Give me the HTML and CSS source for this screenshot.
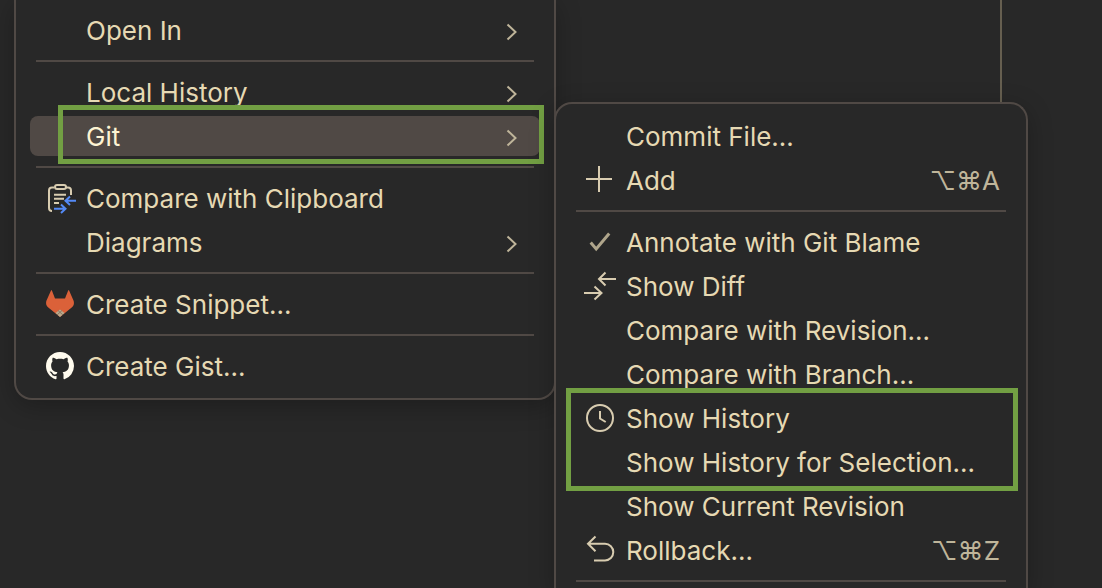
FILE: index.html
```html
<!DOCTYPE html>
<html lang="en">
<head>
    <meta charset="UTF-8">
    <meta name="viewport" content="width=device-width, initial-scale=1.0">
    <title>Git context menu</title>
    <link rel="stylesheet" href="styles.css">
</head>
<body>
<svg class="symbols" aria-hidden="true">
    <symbol id="chevron" viewBox="0 0 32 32">
        <path d="M11.5 10.5l8 7.5-8 7.5"/>
    </symbol>
</svg>

<main class="screen">
    <ul class="menu context-menu">
        <li class="row">
            <button type="button" class="item"><span class="icon"></span><span class="label">Open In</span><svg class="icon arrow"><use href="#chevron"/></svg></button>
        </li>
        <li class="separator"></li>
        <li class="row">
            <button type="button" class="item"><span class="icon"></span><span class="label">Local History</span><svg class="icon arrow"><use href="#chevron"/></svg></button>
        </li>
        <li class="row">
            <button type="button" class="item selected"><span class="icon"></span><span class="label">Git</span><svg class="icon arrow"><use href="#chevron"/></svg></button>
            <span class="marker marker-git"></span>
        </li>
        <li class="separator"></li>
        <li class="row">
            <button type="button" class="item">
                <svg class="icon" viewBox="0 0 32 32">
                    <path d="M10 5.5H8a3 3 0 0 0-3 3V26a3 3 0 0 0 3 3M22 5.5h2a3 3 0 0 1 3 3V13"/>
                    <rect x="11" y="3" width="11" height="4" rx="2"/>
                    <path d="M10 12.7h12M10 16.8h10M10 21h5"/>
                    <path class="blue" d="M32 18.7H22M26 14.5l-4.5 4.2 4.5 4.2M10 26.7h10M17 22.5l4.5 4.2-4.5 4.2"/>
                </svg>
                <span class="label">Compare with Clipboard</span>
            </button>
        </li>
        <li class="row">
            <button type="button" class="item"><span class="icon"></span><span class="label">Diagrams</span><svg class="icon arrow"><use href="#chevron"/></svg></button>
        </li>
        <li class="separator"></li>
        <li class="row">
            <button type="button" class="item">
                <svg class="icon solid" viewBox="0 0 32 32">
                    <path class="fox" d="M7 2.5q.4-1 .9 0L11 10.5h10l3.200-8q.5-1 .9 0L29.700 13q1 4-2 6.500L16 29 4.300 19.500q-3-2.500-2-6.500z"/>
                    <path class="chin" d="M16 21.500l4.500 3.500L16 29l-4.500-4z"/>
                    <path class="chin-lines" d="M14 22.500l5 4.500M18 22.500L13 27"/>
                </svg>
                <span class="label">Create Snippet...</span>
            </button>
        </li>
        <li class="separator"></li>
        <li class="row">
            <button type="button" class="item">
                <svg class="icon solid" viewBox="0 0 32 32">
                    <path class="cat" transform="translate(2 2) scale(1.75)" d="M8 0C3.58 0 0 3.58 0 8c0 3.54 2.29 6.530 5.470 7.590.4.07.55-.17.55-.38 0-.19-.01-.82-.01-1.490-2.010.37-2.530-.49-2.690-.94-.09-.23-.48-.94-.82-1.130-.28-.15-.68-.52-.01-.53.63-.01 1.080.58 1.230.82.72 1.210 1.870.87 2.330.66.07-.52.28-.87.51-1.070-1.780-.2-3.640-.89-3.640-3.950 0-.87.31-1.590.82-2.150-.08-.2-.36-1.020.08-2.120 0 0 .67-.21 2.200.82.64-.18 1.320-.27 2-.27s1.360.09 2 .27c1.530-1.040 2.200-.82 2.200-.82.44 1.100.16 1.920.08 2.120.51.56.82 1.270.82 2.150 0 3.070-1.870 3.750-3.650 3.950.29.25.54.73.54 1.480 0 1.070-.01 1.930-.01 2.200 0 .21.15.46.55.38A8.010 8.010 0 0 0 16 8c0-4.420-3.580-8-8-8z"/>
                </svg>
                <span class="label">Create Gist...</span>
            </button>
        </li>
    </ul>

    <div class="side">
        <div class="guide"></div>
        <ul class="menu submenu">
            <li class="row">
                <button type="button" class="item"><span class="icon"></span><span class="label">Commit File...</span></button>
            </li>
            <li class="row">
                <button type="button" class="item">
                    <svg class="icon" viewBox="0 0 32 32"><path d="M15 2v26M2 15h26"/></svg>
                    <span class="label">Add</span>
                    <kbd class="shortcut">⌥⌘A</kbd>
                </button>
            </li>
            <li class="separator"></li>
            <li class="row">
                <button type="button" class="item">
                    <svg class="icon" viewBox="0 0 32 32"><path class="check" d="M6.700 16.500l5.500 6.500L25.200 7.500"/></svg>
                    <span class="label">Annotate with Git Blame</span>
                </button>
            </li>
            <li class="row">
                <button type="button" class="item">
                    <svg class="icon" viewBox="0 0 32 32"><path d="M32 9H15M21.500 2.500L15 9l6.500 6.500M0 23h17.500M10.500 16.500L17.500 23l-7 6.500"/></svg>
                    <span class="label">Show Diff</span>
                </button>
            </li>
            <li class="row">
                <button type="button" class="item"><span class="icon"></span><span class="label">Compare with Revision...</span></button>
            </li>
            <li class="row">
                <button type="button" class="item"><span class="icon"></span><span class="label">Compare with Branch...</span></button>
            </li>
            <li class="row">
                <button type="button" class="item">
                    <svg class="icon" viewBox="0 0 32 32"><circle cx="16" cy="16" r="13"/><path d="M16 9v7.500l5.700 3.500"/></svg>
                    <span class="label">Show History</span>
                </button>
                <span class="marker marker-history"></span>
            </li>
            <li class="row">
                <button type="button" class="item"><span class="icon"></span><span class="label">Show History for Selection...</span></button>
            </li>
            <li class="row">
                <button type="button" class="item"><span class="icon"></span><span class="label">Show Current Revision</span></button>
            </li>
            <li class="row">
                <button type="button" class="item">
                    <svg class="icon" viewBox="0 0 32 32"><path d="M11.500 2.500L4 9.800l7.500 7.500M4 9.800h17a8.300 8.300 0 0 1 0 16.600H10"/></svg>
                    <span class="label">Rollback...</span>
                    <kbd class="shortcut">⌥⌘Z</kbd>
                </button>
            </li>
            <li class="separator"></li>
        </ul>
    </div>
</main>
</body>
</html>
```
FILE: styles.css
```css
body {
    margin: 0;
    background-color: #282828;
    color: #e6d9b3;
    font-family: Inter, "Liberation Sans", sans-serif;
    font-size: 26px;
    overflow: hidden;
}

.symbols {
    display: none;
}

.screen {
    display: grid;
    grid-template-columns: 542fr 472fr 74fr;
    align-items: start;
    height: 100vh;
    padding-left: 14px;
}

.menu {
    margin: 0;
    padding: 9px 0;
    list-style: none;
    background-color: #282828;
    border: 2px solid #504945;
    border-radius: 18px;
    box-shadow: 0 6px 24px rgba(0, 0, 0, 0.25);
}

.context-menu {
    border-top: none;
    border-top-left-radius: 0;
    border-top-right-radius: 0;
}

/* shares its left border with the context menu */
.side {
    position: relative;
    z-index: 2;
    display: flex;
    flex-direction: column;
    height: 100vh;
    margin-left: -2px;
}

.guide {
    flex: none;
    height: 102px;
    margin-right: 26px;
    border-right: 2px solid #665f50;
}

.submenu {
    flex: 1 0 auto;
    padding: 11px 0 0;
    border-bottom: none;
    border-bottom-left-radius: 0;
    border-bottom-right-radius: 0;
}

.row {
    position: relative;
    padding: 1px 14px 3px;
}

.item {
    display: flex;
    align-items: center;
    gap: 10px;
    width: 100%;
    height: 40px;
    padding: 0 12px 0 14px;
    border: none;
    border-radius: 8px;
    background: none;
    color: inherit;
    font: inherit;
    line-height: 32px;
    text-align: left;
    white-space: nowrap;
}

.item:hover,
.selected {
    background-color: #504945;
    color: #fdf4d3;
}

.label {
    flex: 1;
    padding-top: 2px;
}

.icon {
    flex: none;
    width: 32px;
    height: 32px;
    fill: none;
    stroke: #d8ccb0;
    stroke-width: 2;
    overflow: visible;
}

.arrow {
    stroke: #bfb59a;
}

.solid {
    stroke: none;
}

.blue {
    stroke: #548af7;
}

.fox {
    fill: #db6139;
}

.chin {
    fill: #b9a98c;
}

.chin-lines {
    stroke: #8b7763;
    stroke-width: 1;
}

.cat {
    fill: #fffbee;
}

.check {
    stroke: #afa58b;
    stroke-width: 3;
}

.shortcut {
    padding-top: 2px;
    color: #bfb59a;
    font: inherit;
}

.separator {
    height: 2px;
    margin: 7px 20px 9px;
    background-color: #504945;
}

/* green frames drawn over the rows */
.marker {
    position: absolute;
    z-index: 1;
    border: 5px solid #729f43;
    pointer-events: none;
}

.marker-git {
    top: -10px;
    right: 10px;
    bottom: -5px;
    left: 42px;
}

.marker-history {
    top: -9px;
    right: 8px;
    bottom: -50px;
    left: 10px;
}
```
